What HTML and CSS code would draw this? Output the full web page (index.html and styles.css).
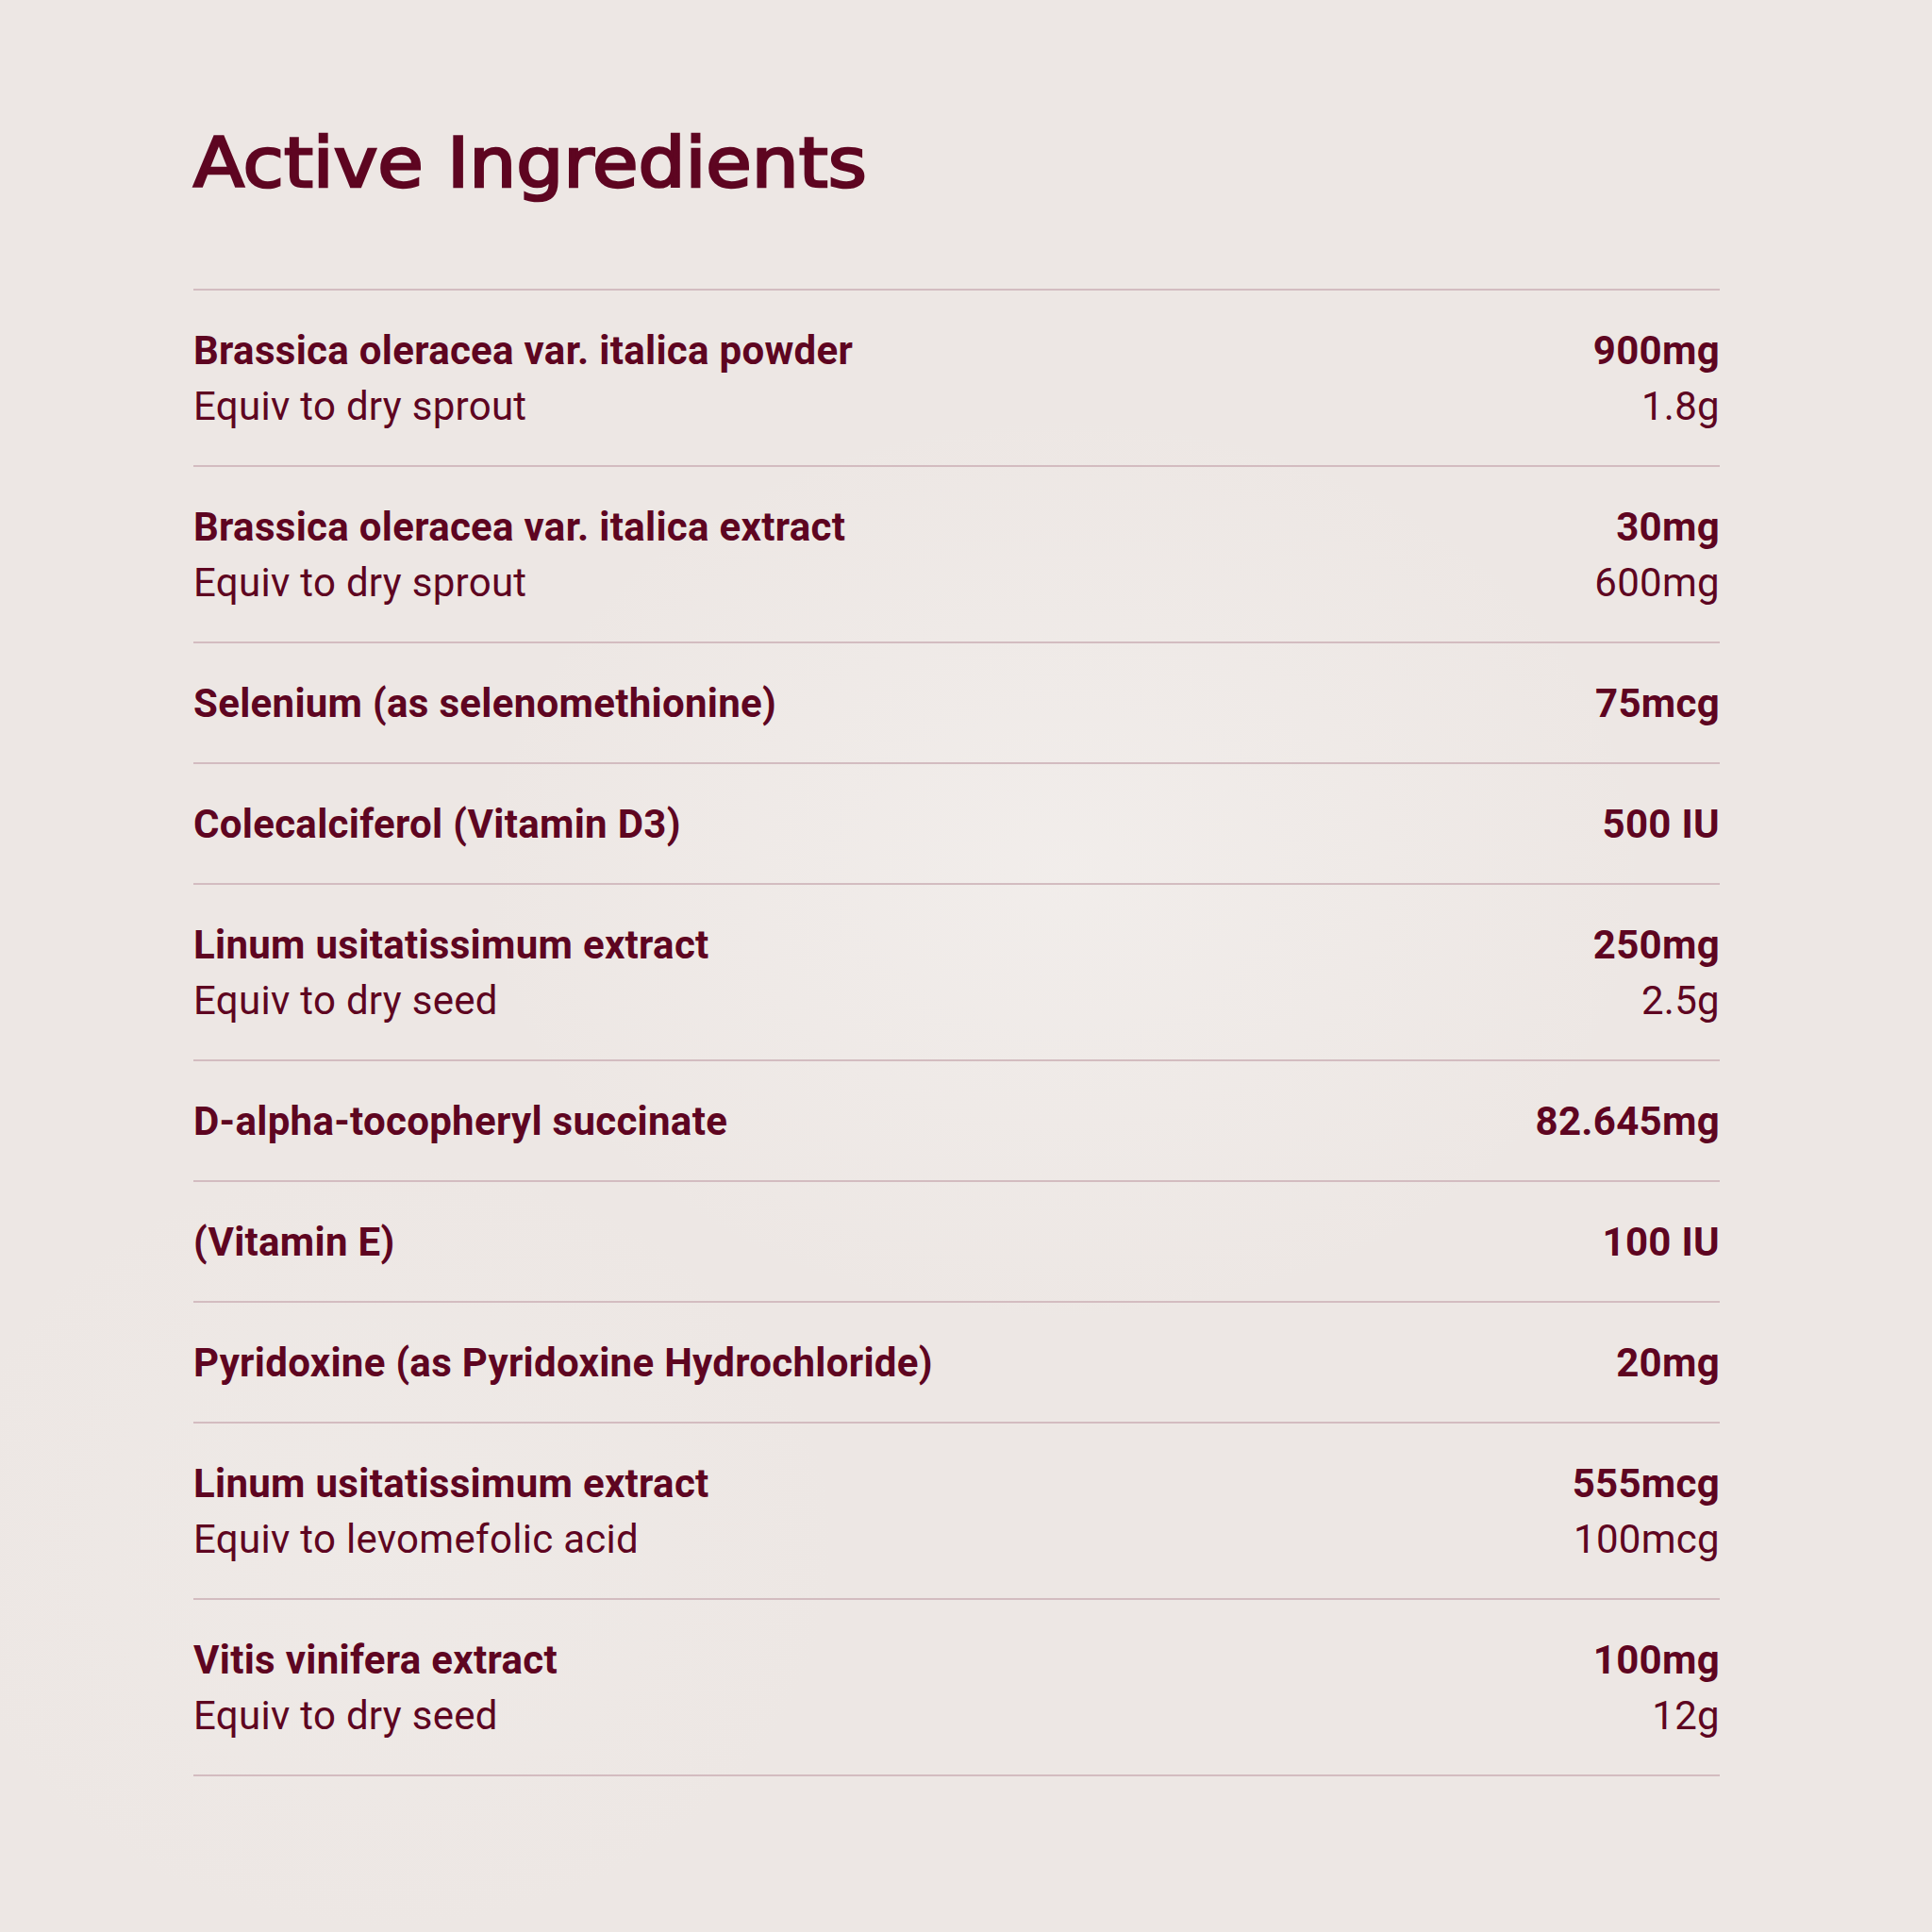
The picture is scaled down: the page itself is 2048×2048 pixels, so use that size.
FILE: index.html
```html
<!DOCTYPE html>
<html lang="en">
<head>
<meta charset="utf-8">
<title>Active Ingredients</title>
<link rel="stylesheet" href="styles.css">
</head>
<body>
<main class="page">
  <h1 class="title">Active Ingredients</h1>
  <ul class="list">
    <li class="row">
      <div class="line"><span class="name">Brassica oleracea var. italica powder</span><span class="amount">900mg</span></div>
      <div class="line sub"><span>Equiv to dry sprout</span><span>1.8g</span></div>
    </li>
    <li class="row">
      <div class="line"><span class="name">Brassica oleracea var. italica extract</span><span class="amount">30mg</span></div>
      <div class="line sub"><span>Equiv to dry sprout</span><span>600mg</span></div>
    </li>
    <li class="row">
      <div class="line"><span class="name">Selenium (as selenomethionine)</span><span class="amount">75mcg</span></div>
    </li>
    <li class="row">
      <div class="line"><span class="name">Colecalciferol (Vitamin D3)</span><span class="amount">500 IU</span></div>
    </li>
    <li class="row">
      <div class="line"><span class="name">Linum usitatissimum extract</span><span class="amount">250mg</span></div>
      <div class="line sub"><span>Equiv to dry seed</span><span>2.5g</span></div>
    </li>
    <li class="row">
      <div class="line"><span class="name">D-alpha-tocopheryl succinate</span><span class="amount">82.645mg</span></div>
    </li>
    <li class="row">
      <div class="line"><span class="name">(Vitamin E)</span><span class="amount">100 IU</span></div>
    </li>
    <li class="row">
      <div class="line"><span class="name">Pyridoxine (as Pyridoxine Hydrochloride)</span><span class="amount">20mg</span></div>
    </li>
    <li class="row">
      <div class="line"><span class="name">Linum usitatissimum extract</span><span class="amount">555mcg</span></div>
      <div class="line sub"><span>Equiv to levomefolic acid</span><span>100mcg</span></div>
    </li>
    <li class="row">
      <div class="line"><span class="name">Vitis vinifera extract</span><span class="amount">100mg</span></div>
      <div class="line sub"><span>Equiv to dry seed</span><span>12g</span></div>
    </li>
  </ul>
</main>
</body>
</html>
```

FILE: styles.css
```css
html, body {
  margin: 0;
  padding: 0;
}

body {
  width: 2048px;
  min-height: 2048px;
  background-color: #ede7e4;
  background-image:
    radial-gradient(ellipse 900px 700px at 55% 45%, rgba(245, 242, 240, 0.55), rgba(245, 242, 240, 0) 70%),
    radial-gradient(ellipse 700px 600px at 20% 80%, rgba(240, 236, 233, 0.5), rgba(240, 236, 233, 0) 70%);
  color: #5e0521;
  font-family: Roboto, "Liberation Sans", sans-serif;
}

.page {
  box-sizing: border-box;
  width: 2048px;
  padding: 136px 225px 0 205px;
}

.title {
  margin: 0;
  font-family: "DejaVu Sans", sans-serif;
  font-weight: normal;
  font-size: 73px;
  line-height: 73px;
  letter-spacing: 0;
  -webkit-text-stroke: 2.6px #5e0521;
  color: #5e0521;
  transform: scaleX(1.08);
  transform-origin: left center;
}

.list {
  list-style: none;
  margin: 97px 0 0 0;
  padding: 0;
  border-top: 2px solid #d3bcc0;
}

.row {
  padding: 33.5px 0;
  border-bottom: 2px solid #d3bcc0;
}

.line {
  display: flex;
  justify-content: space-between;
  font-size: 42px;
  line-height: 59px;
  font-weight: 700;
  letter-spacing: 0.3px;
}

.line.sub {
  font-weight: 400;
}
```
